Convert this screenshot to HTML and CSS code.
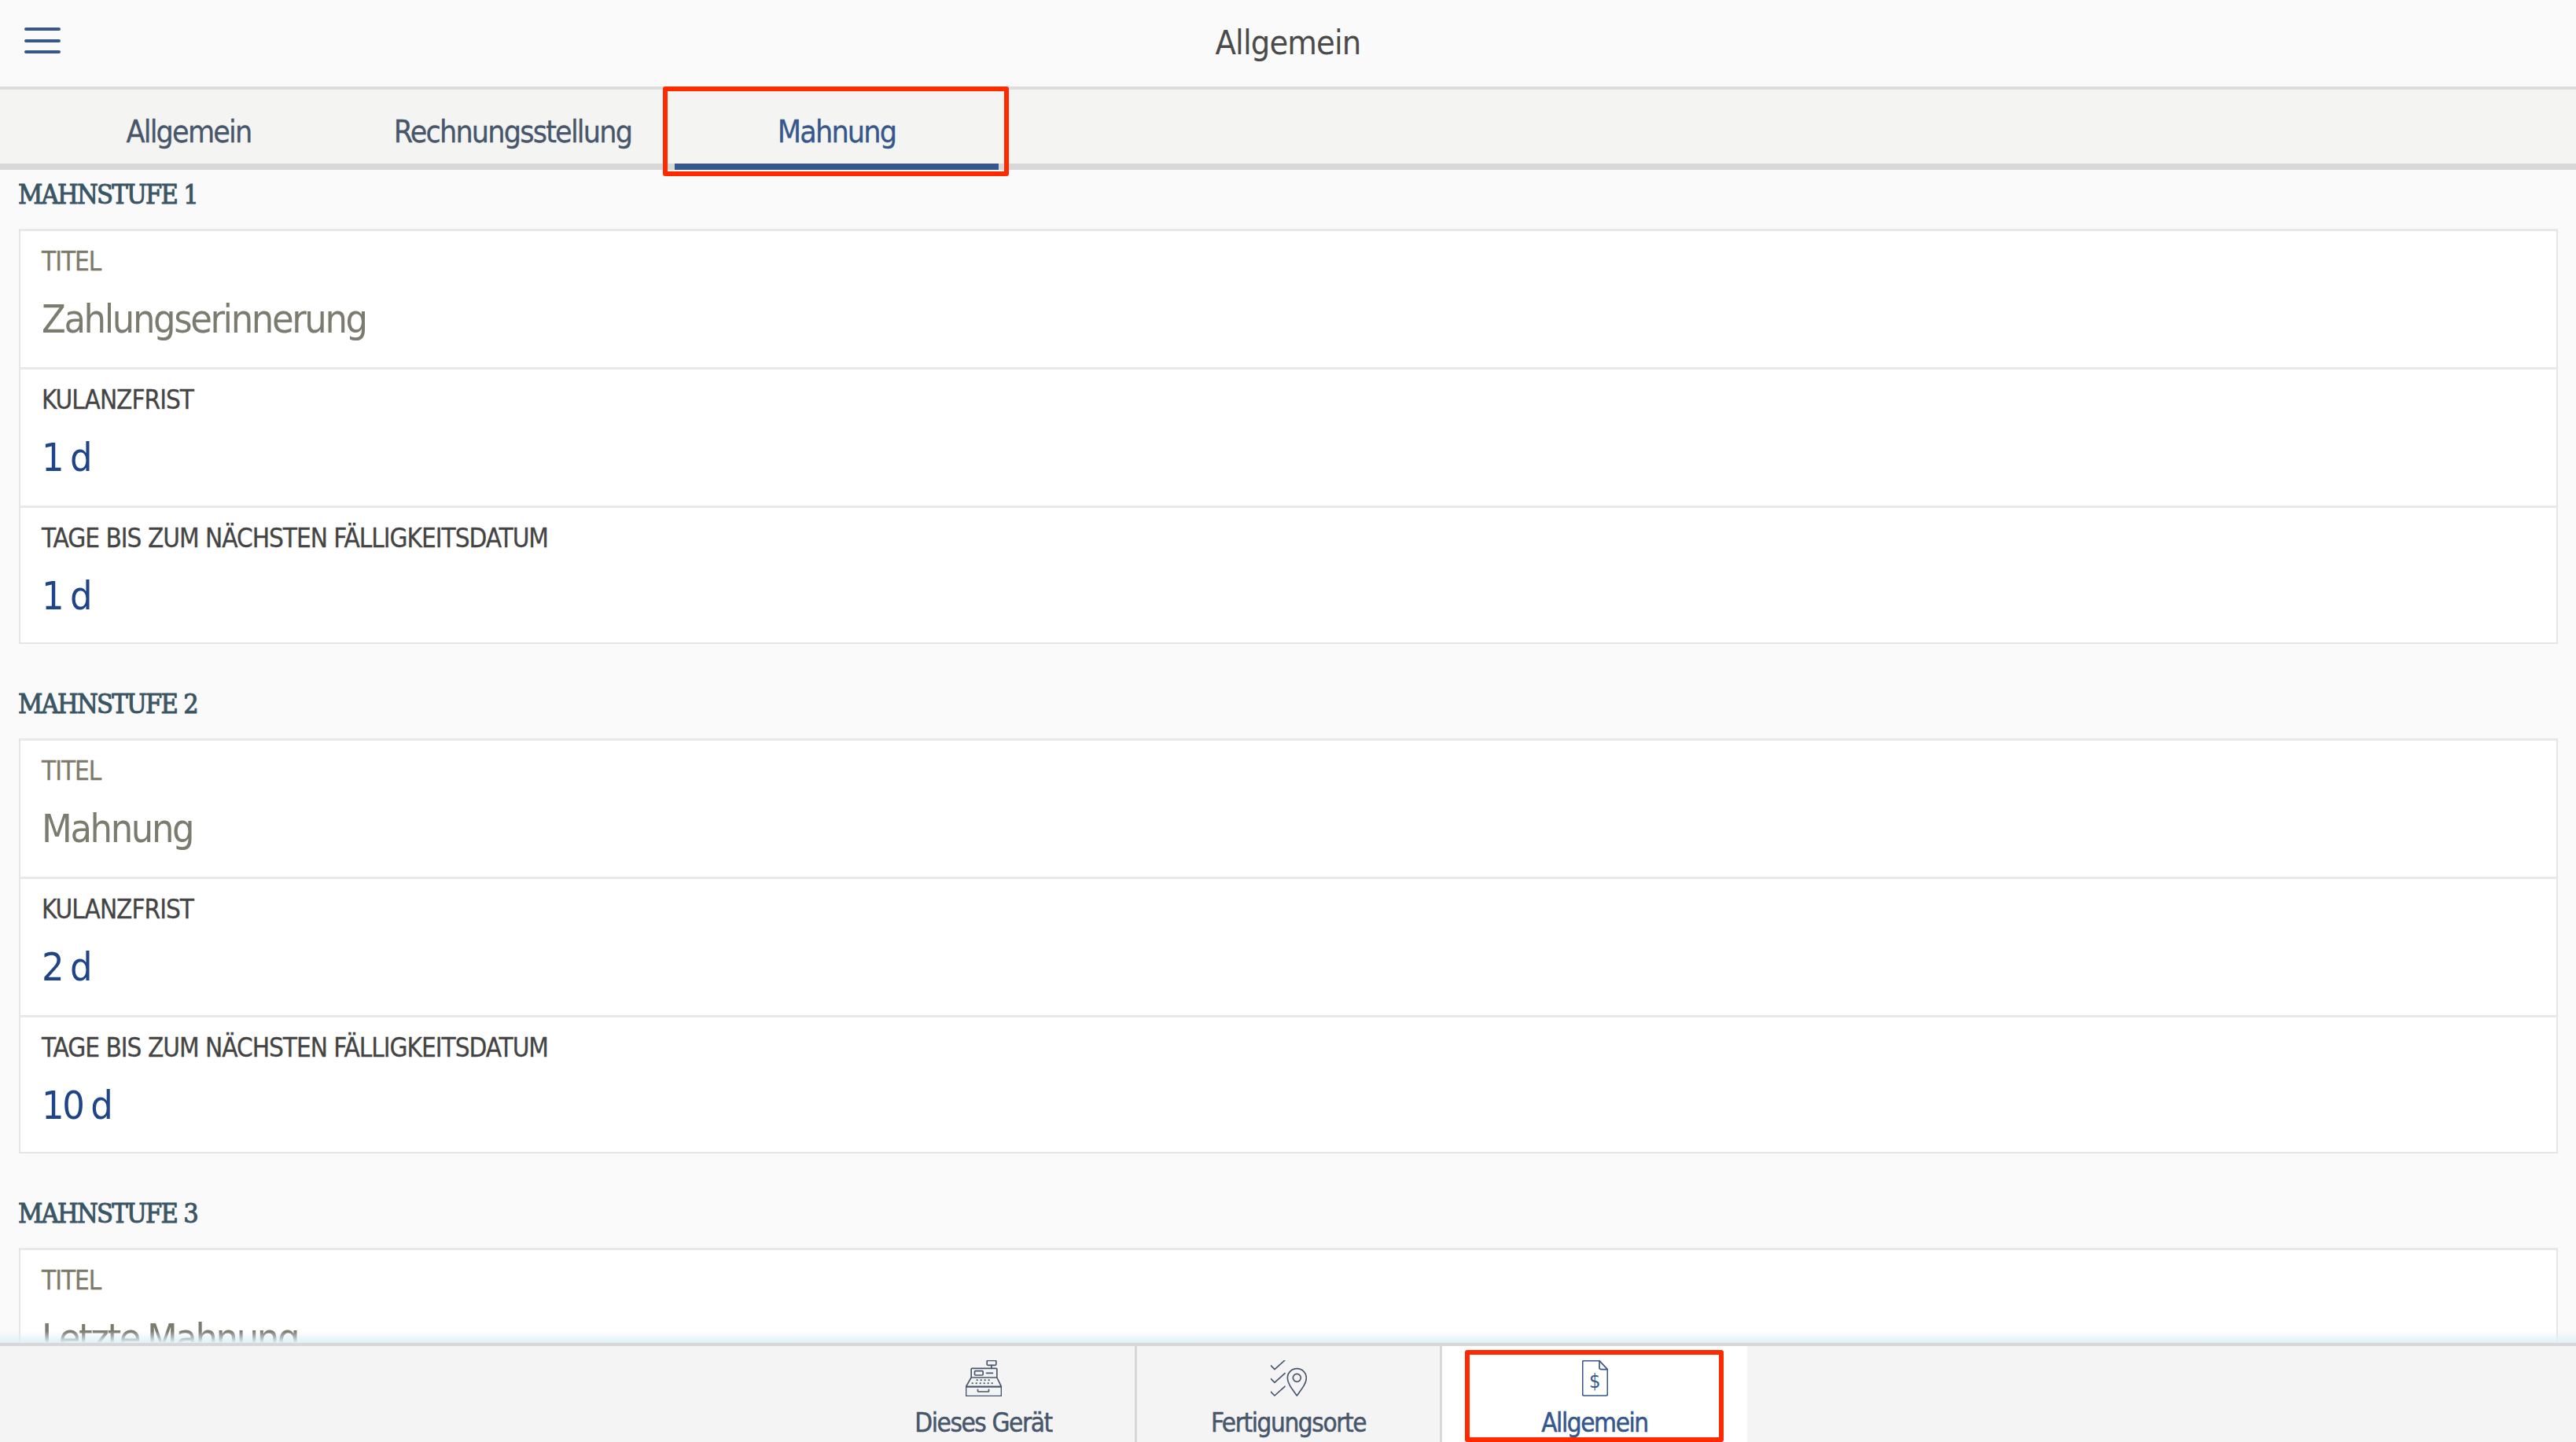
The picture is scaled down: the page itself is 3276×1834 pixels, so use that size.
FILE: index.html
```html
<!DOCTYPE html>
<html>
<head>
  <link rel="stylesheet" href="styles.css">
</head>
<body>
  <div class="app">
    <!-- Top bar -->
    <header class="topbar">
      <div class="burger"><span></span><span></span><span></span></div>
      <div class="topbar-title">Allgemein</div>
    </header>

    <!-- Tabs -->
    <nav class="tabs">
      <div class="tab">Allgemein</div>
      <div class="tab">Rechnungsstellung</div>
      <div class="tab tab-active marked">Mahnung</div>
    </nav>

    <main class="content">
      <section class="level">
        <h2 class="level-title">MAHNSTUFE 1</h2>
        <div class="card">
          <div class="row">
            <div class="label label-muted">TITEL</div>
            <div class="value value-muted">Zahlungserinnerung</div>
          </div>
          <div class="row">
            <div class="label">KULANZFRIST</div>
            <div class="value">1 d</div>
          </div>
          <div class="row">
            <div class="label">TAGE BIS ZUM NÄCHSTEN FÄLLIGKEITSDATUM</div>
            <div class="value">1 d</div>
          </div>
        </div>
      </section>

      <section class="level">
        <h2 class="level-title">MAHNSTUFE 2</h2>
        <div class="card">
          <div class="row">
            <div class="label label-muted">TITEL</div>
            <div class="value value-muted">Mahnung</div>
          </div>
          <div class="row">
            <div class="label">KULANZFRIST</div>
            <div class="value">2 d</div>
          </div>
          <div class="row">
            <div class="label">TAGE BIS ZUM NÄCHSTEN FÄLLIGKEITSDATUM</div>
            <div class="value">10 d</div>
          </div>
        </div>
      </section>

      <section class="level">
        <h2 class="level-title">MAHNSTUFE 3</h2>
        <div class="card">
          <div class="row">
            <div class="label label-muted">TITEL</div>
            <div class="value value-muted">Letzte Mahnung</div>
          </div>
        </div>
      </section>
    </main>

    <!-- Bottom navigation -->
    <footer class="bottombar">
      <div class="nav-item">
        <svg class="nav-icon" width="46" height="46" viewBox="-1 -1 137 138">
          <rect x="80" y="0" width="35" height="18" rx="4"/>
          <path d="M97 18V30"/>
          <rect x="20" y="30" width="98" height="35" rx="3"/>
          <rect x="33" y="40" width="32" height="16" rx="3"/>
          <path d="M78 48H102"/>
          <path d="M20 65L0 100H135L118 65"/>
          <path class="dots" d="M42 75H100M24 87H112"/>
          <rect x="0" y="100" width="135" height="36" rx="3"/>
          <path d="M45 111V117Q45 119 47 119H85Q87 119 87 117V111"/>
        </svg>
        <div class="nav-label">Dieses Gerät</div>
      </div>
      <div class="nav-item">
        <svg class="nav-icon" width="46" height="46" viewBox="0 0 138 138">
          <path d="M0 20L15 35L54 0"/>
          <path d="M0 70L15 85L54 50"/>
          <path d="M0 120L15 135L54 100"/>
          <circle cx="100" cy="67" r="15"/>
          <path d="M100 135C80 108 64 88 64 68A36 36 0 0 1 136 68C136 88 120 108 100 135Z"/>
        </svg>
        <div class="nav-label">Fertigungsorte</div>
      </div>
      <div class="nav-item nav-active marked">
        <svg class="nav-icon" width="33" height="46" viewBox="0 0 99 138">
          <path d="M66 2H7Q2 2 2 7V130Q2 135 7 135H92Q97 135 97 130V35Z"/>
          <path d="M66 2V28Q66 35 73 35H97"/>
          <text class="doc-sign" x="49" y="106" text-anchor="middle">$</text>
        </svg>
        <div class="nav-label">Allgemein</div>
      </div>
    </footer>
  </div>
</body>
</html>
```

FILE: styles.css
```css
* {
  box-sizing: border-box;
  margin: 0;
  padding: 0;
}

body {
  font-family: "DejaVu Sans Condensed", "Liberation Sans", sans-serif;
  background: #fafafa;
}

.app {
  height: 1834px;
  display: flex;
  flex-direction: column;
  overflow: hidden;
}

/* Top bar */
.topbar {
  height: 114px;
  flex: none;
  padding-bottom: 3px;
  border-bottom: 4px solid #dcdcdc;
  background: #fafafa;
  display: flex;
  align-items: center;
  justify-content: center;
  position: relative;
}

.burger {
  position: absolute;
  left: 31px;
  top: 35px;
  width: 46px;
  display: flex;
  flex-direction: column;
  gap: 10.5px;
}

.burger span {
  height: 4px;
  border-radius: 2px;
  background: #35578c;
}

.topbar-title {
  font-size: 43px;
  letter-spacing: -0.9px;
  color: #4a4a4a;
}

/* Tabs */
.tabs {
  height: 102px;
  flex: none;
  padding-left: 34px;
  background: #f4f4f2;
  border-bottom: 8px solid #d8d8d8;
  display: flex;
}

.tab {
  width: 412px;
  height: 102px;
  padding-top: 31px;
  text-align: center;
  font-size: 39px;
  letter-spacing: -1.8px;
  -webkit-text-stroke: 0.3px currentColor;
  color: #47566b;
  position: relative;
  border-bottom: 8px solid transparent;
}

.tab-active {
  color: #35578c;
  border-bottom-color: #35578c;
}

/* Red annotation frames */
.marked::after {
  content: "";
  position: absolute;
  border: 6px solid #ff2a00;
  border-radius: 3px;
}

.tab.marked::after {
  left: -15px;
  right: -13px;
  top: -4px;
  bottom: -16px;
}

.nav-item.marked::after {
  left: 29px;
  right: 30px;
  top: 5px;
  bottom: 0;
}

/* Content */
.content {
  flex: 1;
  min-height: 0;
  overflow: hidden;
  padding: 0 23px 0 24px;
}

.level {
  margin-bottom: 45px;
}

.level-title {
  height: 75px;
  padding-top: 10px;
  margin-left: -1px;
  font-family: "DejaVu Serif Condensed", "DejaVu Serif", serif;
  font-size: 34px;
  line-height: 42px;
  font-weight: normal;
  letter-spacing: -1.7px;
  -webkit-text-stroke: 1px #3a5564;
  color: #3a5564;
}

.card {
  background: #fff;
  border: 2px solid #e6e6e6;
  border-top: none;
}

.row {
  height: 176px;
  border-top: 3px solid #e8e8e8;
  padding: 20px 0 0 27px;
}

.row:last-child {
  height: 174px;
}

.label {
  font-size: 33px;
  line-height: 38px;
  letter-spacing: -1px;
  -webkit-text-stroke: 0.3px currentColor;
  color: #444;
}

.label-muted {
  color: #7d7a6b;
}

.value {
  margin-top: 25px;
  font-size: 50px;
  line-height: 58px;
  letter-spacing: -2.4px;
  word-spacing: -2px;
  color: #1f4488;
}

.value-muted {
  color: #7b7b70;
}

/* Bottom navigation */
.bottombar {
  height: 126px;
  flex: none;
  padding-left: 4px;
  background: #f4f4f4;
  border-top: 4px solid #d8d8d8;
  display: flex;
  justify-content: center;
  position: relative;
}

.bottombar::before {
  content: "";
  position: absolute;
  left: 0;
  right: 0;
  top: -19px;
  height: 15px;
  background: linear-gradient(to bottom, rgba(224, 240, 248, 0), rgba(224, 240, 248, 1));
}

.nav-item {
  width: 388px;
  padding-top: 18px;
  border-right: 3px solid #d8d8d8;
  text-align: center;
  color: #47566b;
  position: relative;
}

.nav-item:last-child {
  border-right: none;
}

.nav-icon {
  display: block;
  margin: 0 auto;
  fill: none;
  stroke: currentColor;
  stroke-width: 5;
  stroke-linejoin: round;
  stroke-linecap: round;
}

.dots {
  stroke-dasharray: 1 14;
  stroke-width: 6;
}

.doc-sign {
  font-size: 76px;
  fill: currentColor;
  stroke: none;
}

.nav-label {
  margin-top: 15px;
  font-size: 33px;
  line-height: 38px;
  letter-spacing: -1.4px;
  -webkit-text-stroke: 0.5px currentColor;
}

.nav-active {
  background: #fff;
  color: #35578c;
}
```
